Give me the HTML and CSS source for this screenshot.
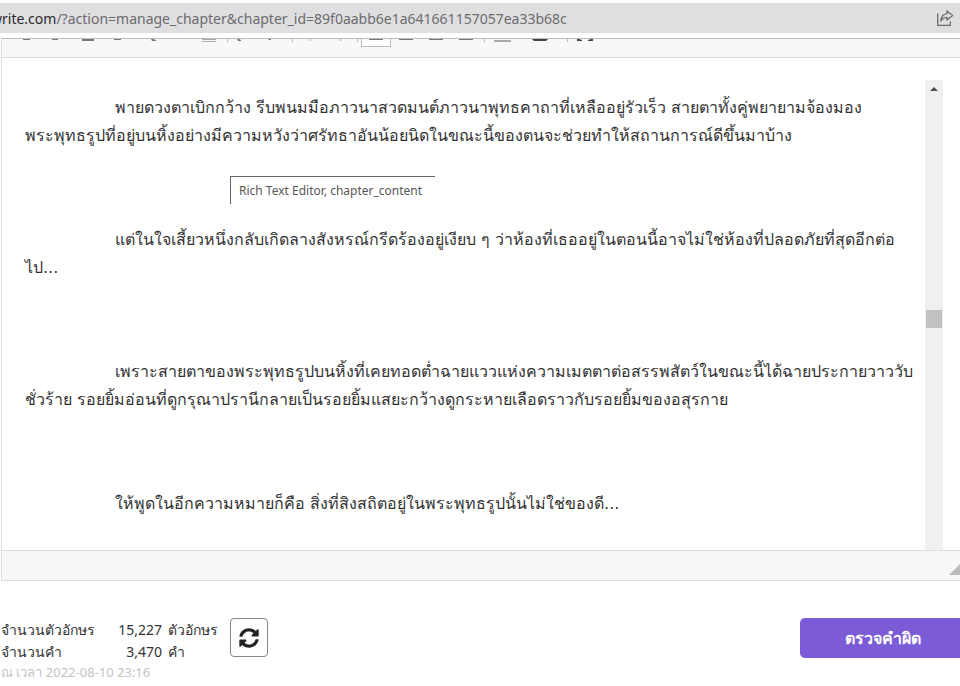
FILE: index.html
```html
<!DOCTYPE html>
<html lang="th">
<head>
  <meta charset="UTF-8" />
  <meta name="viewport" content="width=device-width, initial-scale=1.0" />
  <title>manage chapter</title>
  <link rel="stylesheet" href="styles.css">
</head>
<body>
  <header class="address-bar">
    <span class="url"><b>write.com</b>/?action=manage_chapter&amp;chapter_id=89f0aabb6e1a641661157057ea33b68c</span>
    <button class="share-btn" aria-label="Share">
      <svg width="18" height="18" viewBox="0 0 18 18" fill="none" stroke="#6b6b6d" stroke-width="1.3">
        <path d="M1.7 4.5v11.8h12.6v-3.8"/>
        <path d="M11 2l5.6 4.6L11 11V8.4C8 8.4 6.300 9.600 4.800 12.200 5.200 8 7.400 5 11 4.700z" stroke-linejoin="round"/>
      </svg>
    </button>
  </header>

  <main>
    <section class="editor">
      <!-- toolbar is scrolled under the address bar -->
      <div class="toolbar">
        <div class="tool-group">
          <button aria-label="Bold"><svg width="30" height="8"><path d="M13 0h7v1h-7z"/></svg></button>
          <button aria-label="Italic"><svg width="30" height="8"><path d="M12 0h6v1h-6z"/></svg></button>
          <button aria-label="Underline"><svg width="30" height="8"><path d="M12 0h12v2H12z"/></svg></button>
          <button aria-label="Strike"><svg width="30" height="8"><path d="M14 0h7v1h-7z"/></svg></button>
        </div>
        <div class="tool-group small">
          <button aria-label="Text color"><svg width="29" height="8"><path d="M14 0h2l3 1v1h-4z"/></svg></button>
          <button aria-label="Background color"></button>
          <button aria-label="Remove format"><svg width="29" height="8" class="grey"><path d="M7 0h14v1H7zM7 2h14v1H7z"/></svg></button>
        </div>
        <i class="sep"></i>
        <div class="tool-group small">
          <button aria-label="Undo"><svg width="29" height="8"><path d="M6 0h2l2 1v1H7z"/></svg></button>
          <button aria-label="Redo"><svg width="29" height="8"><path d="M8 0h3v1H9z"/></svg></button>
        </div>
        <i class="sep"></i>
        <div class="tool-group small">
          <button aria-label="Link"><svg width="29" height="8" class="grey"><path d="M14 0h1v2h-1z"/></svg></button>
          <button aria-label="Unlink"><svg width="29" height="8" class="grey"><path d="M15 0h1v2h-1z"/></svg></button>
        </div>
        <i class="sep"></i>
        <div class="tool-group">
          <button class="on" aria-label="Align left"><svg width="28" height="8"><path d="M7 0h14v1H7z"/></svg></button>
          <button aria-label="Center"><svg width="30" height="8"><path d="M8 0h14v1H8z"/></svg></button>
          <button aria-label="Align right"><svg width="30" height="8"><path d="M8 0h14v1H8z"/></svg></button>
          <button aria-label="Justify"><svg width="30" height="8"><path d="M8 0h14v1H8z"/></svg></button>
        </div>
        <i class="sep"></i>
        <div class="tool-group wide">
          <button aria-label="Horizontal line"><svg width="38" height="8" class="grey"><path d="M6 1h17v2H6z"/></svg></button>
          <button aria-label="Image"><svg width="38" height="8" class="dark"><path d="M6 0h16l-2 2H8z"/></svg></button>
        </div>
        <i class="sep"></i>
        <div class="tool-group">
          <button aria-label="Maximize"><svg width="30" height="8" class="dark"><path d="M6 0h2l3 1v1H6zM20 0h2v2h-5V1z"/></svg></button>
        </div>
      </div>

      <div class="edit-area">
        <div class="content" contenteditable="true" role="textbox" aria-label="Rich Text Editor, chapter_content" spellcheck="false">
          <p>พายดวงตาเบิกกว้าง รีบพนมมือภาวนาสวดมนต์ภาวนาพุทธคาถาที่เหลืออยู่รัวเร็ว สายตาทั้งคู่พยายามจ้องมอง<br>พระพุทธรูปที่อยู่บนหิ้งอย่างมีความหวังว่าศรัทธาอันน้อยนิดในขณะนี้ของตนจะช่วยทำให้สถานการณ์ดีขึ้นมาบ้าง</p>
          <p>แต่ในใจเสี้ยวหนึ่งกลับเกิดลางสังหรณ์กรีดร้องอยู่เงียบ ๆ ว่าห้องที่เธออยู่ในตอนนี้อาจไม่ใช่ห้องที่ปลอดภัยที่สุดอีกต่อ<br>ไป...</p>
          <p>เพราะสายตาของพระพุทธรูปบนหิ้งที่เคยทอดต่ำฉายแววแห่งความเมตตาต่อสรรพสัตว์ในขณะนี้ได้ฉายประกายวาววับ<br>ชั่วร้าย รอยยิ้มอ่อนที่ดูกรุณาปรานีกลายเป็นรอยยิ้มแสยะกว้างดูกระหายเลือดราวกับรอยยิ้มของอสุรกาย</p>
          <p>ให้พูดในอีกความหมายก็คือ สิ่งที่สิงสถิตอยู่ในพระพุทธรูปนั้นไม่ใช่ของดี...</p>
        </div>
        <div class="scrollbar">
          <div class="arrow-up"></div>
          <div class="thumb"></div>
        </div>
        <div class="tooltip">Rich Text Editor, chapter_content</div>
      </div>

      <div class="editor-bottom"><span class="resizer"></span></div>
    </section>

    <section class="stats">
      <div class="counts">
        <table>
          <tr><th>จำนวนตัวอักษร</th><td class="num">15,227</td><td>ตัวอักษร</td></tr>
          <tr><th>จำนวนคำ</th><td class="num">3,470</td><td>คำ</td></tr>
        </table>
        <p class="updated">ณ เวลา 2022-08-10 23:16</p>
      </div>
      <button class="refresh-btn" aria-label="Refresh">
        <svg width="20" height="20" viewBox="0 0 512 512" fill="#222">
          <path d="M371 133c-32-30-72-46-116-46-78 0-146 54-165 128-1 5-6 9-12 9H21c-7 0-13-7-12-14C31 92 133 8 256 8c67 0 128 26 173 69l35-35c15-15 40-5 40 17v133c0 13-11 24-24 24H347c-21 0-32-26-17-41zM32 296h133c21 0 32 26 17 41l-41 41c32 30 72 47 116 47 78 0 146-54 165-129 1-5 6-9 12-9h57c7 0 13 7 12 14-22 119-124 203-247 203-67 0-128-26-173-69l-35 35c-15 15-40 5-40-17V320c0-13 10-24 24-24z"/>
        </svg>
      </button>
      <button class="check-btn">ตรวจคำผิด</button>
    </section>
  </main>
</body>
</html>
```

FILE: styles.css
```css
html, body {
  margin: 0;
  padding: 0;
  background: #fff;
  color: #333;
  font-family: "Noto Sans", "DejaVu Sans", sans-serif;
  overflow: hidden;
}
button {
  margin: 0;
  padding: 0;
  border: none;
  background: none;
  font-family: inherit;
  cursor: pointer;
}
svg {
  display: block;
}

/* address bar */
.address-bar {
  display: flex;
  align-items: center;
  justify-content: space-between;
  height: 30px;
  margin-top: 3px;
  margin-bottom: 5px;
  padding-right: 6px;
  background: #dfdfe1;
}
.url {
  margin-left: -9px;
  font-size: 14px;
  color: #6b6b6d;
  white-space: nowrap;
}
.url b {
  font-weight: normal;
  color: #2b2b2d;
}

/* editor */
.editor {
  margin-left: 1px;
  border: 1px solid #ddd;
  border-top-color: #bbb;
  border-right: none;
}
.toolbar {
  display: flex;
  align-items: flex-start;
  height: 18px;
  padding-left: 8px;
  background: #f8f8f8;
  border-bottom: 1px solid #ddd;
}
.tool-group {
  display: flex;
}
.tool-group + .tool-group {
  margin-left: 7px;
}
.tool-group button {
  width: 30px;
  height: 8px;
  box-sizing: border-box;
}
.tool-group.small button {
  width: 29px;
}
.tool-group.wide button {
  width: 38px;
}
.tool-group .on {
  border: 1px solid #bbb;
  border-top: none;
  background: #fff;
}
.tool-group svg {
  fill: #777;
}
.tool-group .grey {
  fill: #aaa;
}
.tool-group .dark {
  fill: #444;
}
.sep {
  width: 1px;
  height: 3px;
  margin: 0 3px;
  background: #bbb;
}
.edit-area {
  position: relative;
  display: flex;
  height: 492px;
}
.content {
  flex: 1;
  padding: 36px 0 0 23px;
  outline: none;
  overflow: hidden;
  font-family: "DejaVu Sans", "Noto Sans", sans-serif;
  font-size: 16px;
  line-height: 28px;
  white-space: nowrap;
}
.content p {
  margin: 0 0 76px;
  text-indent: 90px;
}
.scrollbar {
  width: 18px;
  margin: 22px 17px 0 0;
  background: #f0f0f0;
}
.arrow-up {
  width: 0;
  margin: 7px auto 0;
  border: 4px solid transparent;
  border-top: none;
  border-bottom-color: #505050;
}
.thumb {
  height: 18px;
  margin: 219px 1px 0;
  background: #c1c1c1;
}
.tooltip {
  position: absolute;
  top: 118px;
  left: 228px;
  width: 196px;
  padding-left: 8px;
  border-top: 1px solid #666;
  border-left: 1px solid #666;
  background: #fff;
  color: #575757;
  font-size: 12px;
  line-height: 27px;
  white-space: nowrap;
}
.editor-bottom {
  display: flex;
  justify-content: flex-end;
  align-items: flex-end;
  height: 30px;
  box-sizing: border-box;
  padding-bottom: 5px;
  background: #f8f8f8;
  border-top: 1px solid #ddd;
}
.resizer {
  border-left: 11px solid transparent;
  border-bottom: 11px solid #bbb;
}

/* counters */
.stats {
  display: flex;
  align-items: flex-start;
  padding-top: 37px;
}
.counts {
  width: 230px;
  padding-top: 1px;
}
.counts table {
  border-collapse: collapse;
  font-size: 14px;
  line-height: 22px;
}
.counts th, .counts td {
  padding: 0 0 0 1px;
  font-weight: normal;
  text-align: left;
  white-space: nowrap;
}
.counts th {
  width: 104px;
}
.counts .num {
  width: 56px;
  padding-right: 5px;
  text-align: right;
}
.updated {
  margin: 0;
  padding-left: 1px;
  color: #c4c4c4;
  font-size: 13px;
  line-height: 18px;
}
.refresh-btn {
  display: flex;
  align-items: center;
  justify-content: center;
  width: 38px;
  height: 39px;
  border: 1px solid #888;
  border-radius: 4px;
}
.check-btn {
  width: 165px;
  height: 40px;
  margin-left: auto;
  margin-right: -5px;
  border-radius: 5px;
  background: #7c5bd6;
  color: #fff;
  font-size: 16px;
  font-weight: bold;
}
```
